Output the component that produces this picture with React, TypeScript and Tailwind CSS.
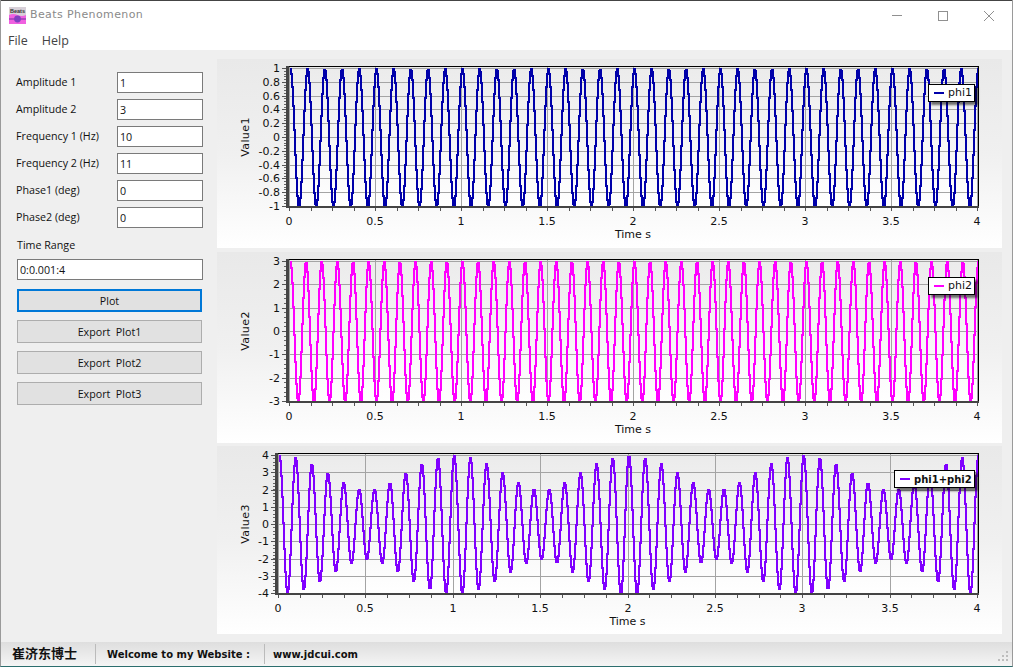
const W = 785;

type PlotProps = {
  className?: string;
  h: number;
  yLabel: string;
  left: number; // inner plot box, in card coords
  right: number;
  bottom: number;
  ticks: number[];
  color: string;
  fn: (t: number) => number;
  legend: string;
  legendBold?: boolean;
  legendTop: number;
  legendLeft: number;
  legendWidth: number;
};

const xTicks = [0, 0.5, 1, 1.5, 2, 2.5, 3, 3.5, 4];
const top = 7;
const right = 762;

const Plot = ({
  className,
  h,
  yLabel,
  left,
  bottom,
  ticks,
  color,
  fn,
  legend,
  legendBold,
  legendTop,
  legendLeft,
  legendWidth,
}: PlotProps) => {
  const x0 = left + 2;
  const x1 = right - 2;
  const sx = (t: number) => Math.round(x0 + ((x1 - x0) * t) / 4);
  const yMax = ticks[0];
  const yMin = ticks[ticks.length - 1];
  const sy = (v: number) =>
    Math.round(top + 2 + ((bottom - top - 4) * (yMax - v)) / (yMax - yMin));

  // one sample per pixel column, joined as stairs like the non antialiased curve
  let d = "";
  for (let px = x0; px <= x1; px++) {
    const y = sy(fn(((px - x0) / (x1 - x0)) * 4));
    d += `${d ? "L" : "M"}${px + 0.5},${y + 0.5} L${px + 1.5},${y + 0.5} `;
  }

  const step = ticks[0] - ticks[1];
  const minors: number[] = [];
  for (let v = yMin; v <= yMax + 1e-9; v += step / 5) minors.push(v);

  const xMinors: number[] = [];
  for (let t = 0; t <= 4.001; t += 0.125) xMinors.push(t);

  return (
    <div
      className={`relative w-full bg-gradient-to-b from-[#e9e9e9] via-[#f0f0f0] to-white ${className ?? ""}`}
      style={{ height: h }}
    >
      <svg width={W} height={h} className="absolute left-0 top-0 font-['DejaVu_Sans',sans-serif]">
        <defs>
          <linearGradient id={`bg-${yLabel}`} x1="0" y1="0" x2="0" y2="1">
            <stop offset="0" stopColor="#ebebeb" />
            <stop offset="1" stopColor="#ffffff" />
          </linearGradient>
        </defs>
        <rect x={left} y={top} width={right - left} height={bottom - top} fill={`url(#bg-${yLabel})`} />
        <g shapeRendering="crispEdges" stroke="#a4a4a4" strokeWidth="1">
          {ticks.map((v) => (
            <line key={v} x1={left} x2={right} y1={sy(v) + 0.5} y2={sy(v) + 0.5} />
          ))}
          {xTicks.map((t) => (
            <line key={t} x1={sx(t) + 0.5} x2={sx(t) + 0.5} y1={top} y2={bottom} />
          ))}
        </g>
        <path d={d} fill="none" stroke={color} strokeWidth="2" shapeRendering="crispEdges" />
        <g shapeRendering="crispEdges">
          <rect x={left} y={top} width={right - left} height={1} fill="#000" />
          <rect x={right - 1} y={top} width={1} height={bottom - top} fill="#000" />
          <rect x={left - 1} y={top} width={3} height={bottom - top} fill="#444" />
          <rect x={left - 1} y={bottom - 2} width={right - left + 1} height={2} fill="#444" />
          {minors.map((v) => (
            <rect key={v} x={left - 3} y={sy(v)} width={2} height={1} fill="#666" />
          ))}
          {ticks.map((v) => (
            <rect key={v} x={left - 5} y={sy(v)} width={4} height={1} fill="#555" />
          ))}
          {xMinors.map((t) => (
            <rect key={t} x={sx(t)} y={bottom} width={1} height={3} fill="#555" />
          ))}
        </g>
        <g fontSize="11" fill="#111">
          {ticks.map((v) => (
            <text key={v} x={left - 7} y={sy(v) + 4} textAnchor="end">
              {Number(v.toFixed(1))}
            </text>
          ))}
          {xTicks.map((t) => (
            <text key={t} x={sx(t)} y={bottom + 17} textAnchor="middle">
              {t}
            </text>
          ))}
          <text x={(left + right) / 2} y={bottom + 30} textAnchor="middle">
            Time s
          </text>
          <text
            transform={`translate(32 ${(top + bottom) / 2}) rotate(-90)`}
            textAnchor="middle"
            letterSpacing="0.4"
          >
            {yLabel}
          </text>
        </g>
      </svg>
      <div
        className={`absolute flex h-[18px] items-center gap-[4px] border border-black bg-white pl-[5px] text-[#111] shadow-[3px_3px_2px_rgba(0,0,0,0.55)] font-['DejaVu_Sans',sans-serif] ${
          legendBold ? "text-[10px] font-bold" : "text-[11px]"
        }`}
        style={{ top: legendTop, left: legendLeft, width: legendWidth }}
      >
        <span className="h-[2px] w-[10px] shrink-0" style={{ backgroundColor: color }} />
        <span className="whitespace-nowrap">{legend}</span>
      </div>
    </div>
  );
};

const Field = ({ label, value }: { label: string; value: string }) => (
  <div className="flex h-[21px] items-center">
    <span className="w-[101px] whitespace-nowrap">{label}</span>
    <input
      readOnly
      value={value}
      className="h-[21px] w-[86px] border border-[#7a7a7a] bg-white px-[2px] outline-none"
    />
  </div>
);

const ActionButton = ({ label, focused }: { label: string; focused?: boolean }) => (
  <button
    className={`h-[23px] w-[185px] whitespace-pre bg-[#e1e1e1] pt-px text-center ${
      focused ? "border-2 border-[#0078d7]" : "border border-[#adadad]"
    }`}
  >
    {label}
  </button>
);

export default function App() {
  return (
    <div className="relative flex h-[667px] w-[1013px] flex-col overflow-hidden border-x border-b border-x-[#9a9a9a] border-b-[#2c6e6e] bg-white font-['Open_Sans',sans-serif] text-[10.7px] text-[#111]">
      <div className="flex h-[30px] shrink-0 items-center justify-between border-t border-t-[#444] bg-white pl-[8px]">
        <div className="flex items-center gap-[4px]">
          <svg width="17" height="17" viewBox="0 0 17 17">
            <rect width="17" height="17" fill="#d8d0d8" />
            <path d="M0 8 Q4 6 8.5 8 T17 8 V17 H0 Z" fill="#f060e0" />
            <path d="M0 12 H17" stroke="#7030a0" strokeWidth="1" />
            <circle cx="8.5" cy="12" r="3.4" fill="#8040c0" />
            <text x="8.5" y="6" fontSize="5.5" fontWeight="bold" textAnchor="middle" fill="#333" fontFamily="Liberation Sans">
              Beats
            </text>
          </svg>
          <span className="text-[11px] tracking-[0.4px] text-[#8a8a8a] font-['DejaVu_Sans',sans-serif]">
            Beats Phenomenon
          </span>
        </div>
        <div className="flex items-center">
          <div className="flex h-[29px] w-[46px] items-center justify-center">
            <div className="h-px w-[10px] bg-[#909090]" />
          </div>
          <div className="flex h-[29px] w-[46px] items-center justify-center">
            <div className="h-[10px] w-[10px] border border-[#909090]" />
          </div>
          <div className="flex h-[29px] w-[46px] items-center justify-center">
            <svg width="10" height="10" viewBox="0 0 10 10" stroke="#909090" strokeWidth="1">
              <path d="M0 0 L10 10 M10 0 L0 10" />
            </svg>
          </div>
        </div>
      </div>

      <div className="flex h-[20px] shrink-0 items-center gap-[14px] bg-white pl-[7px] pt-[2px] text-[12.5px] text-[#444]">
        <span>File</span>
        <span>Help</span>
      </div>

      <div className="flex min-h-0 flex-1 bg-[#efefef] pt-[9px]">
        <div className="flex w-[216px] shrink-0 flex-col pl-[15px] pt-[13px]">
          <div className="flex flex-col gap-[6px]">
            <Field label="Amplitude 1" value="1" />
            <Field label="Amplitude 2" value="3" />
            <Field label="Frequency 1 (Hz)" value="10" />
            <Field label="Frequency 2 (Hz)" value="11" />
            <Field label="Phase1 (deg)" value="0" />
            <Field label="Phase2 (deg)" value="0" />
          </div>
          <div className="ml-px mt-[9px] h-[16px] leading-[16px]">Time Range</div>
          <input
            readOnly
            value="0:0.001:4"
            className="ml-px mt-[6px] h-[21px] w-[186px] border border-[#7a7a7a] bg-white px-[2px] outline-none"
          />
          <div className="ml-px mt-[9px] flex flex-col gap-[8px]">
            <ActionButton label="Plot" focused />
            <ActionButton label="Export  Plot1" />
            <ActionButton label="Export  Plot2" />
            <ActionButton label="Export  Plot3" />
          </div>
        </div>

        <div className="flex w-[785px] shrink-0 flex-col">
          <Plot
            h={189}
            yLabel="Value1"
            left={70}
            right={right}
            bottom={149}
            ticks={[1, 0.8, 0.6, 0.4, 0.2, 0, -0.2, -0.4, -0.6, -0.8, -1]}
            color="#0000aa"
            fn={(t) => Math.cos(2 * Math.PI * 10 * t)}
            legend="phi1"
            legendTop={25}
            legendLeft={711}
            legendWidth={47}
          />
          <Plot
            className="mt-[4px]"
            h={191}
            yLabel="Value2"
            left={70}
            right={right}
            bottom={151}
            ticks={[3, 2, 1, 0, -1, -2, -3]}
            color="#ff00ff"
            fn={(t) => 3 * Math.cos(2 * Math.PI * 11 * t)}
            legend="phi2"
            legendTop={25}
            legendLeft={711}
            legendWidth={47}
          />
          <Plot
            className="mt-[3px]"
            h={188}
            yLabel="Value3"
            left={59}
            right={right}
            bottom={149}
            ticks={[4, 3, 2, 1, 0, -1, -2, -3, -4]}
            color="#8000ff"
            fn={(t) => Math.cos(2 * Math.PI * 10 * t) + 3 * Math.cos(2 * Math.PI * 11 * t)}
            legend="phi1+phi2"
            legendBold
            legendTop={24}
            legendLeft={677}
            legendWidth={81}
          />
        </div>
      </div>

      <div className="flex h-[24px] shrink-0 items-center whitespace-nowrap bg-gradient-to-b from-[#dedede] to-[#f5f5f5] text-[10px] font-bold text-[#111] font-['DejaVu_Sans','Noto_Sans_CJK_SC',sans-serif]">
        <span className="w-[94px] pl-[11px] text-[13px]">崔济东博士</span>
        <span className="flex h-[20px] w-[169px] items-center border-l border-[#bbb] pl-[11px]">
          Welcome to my Website :
        </span>
        <span className="flex h-[20px] items-center border-l border-[#bbb] pl-[8px]">www.jdcui.com</span>
      </div>

      <svg width="12" height="12" viewBox="0 0 12 12" fill="#bdbdbd" className="absolute bottom-[3px] right-[2px]">
        <rect x="8" y="0" width="2" height="2" />
        <rect x="4" y="4" width="2" height="2" />
        <rect x="8" y="4" width="2" height="2" />
        <rect x="0" y="8" width="2" height="2" />
        <rect x="4" y="8" width="2" height="2" />
        <rect x="8" y="8" width="2" height="2" />
      </svg>
    </div>
  );
}
